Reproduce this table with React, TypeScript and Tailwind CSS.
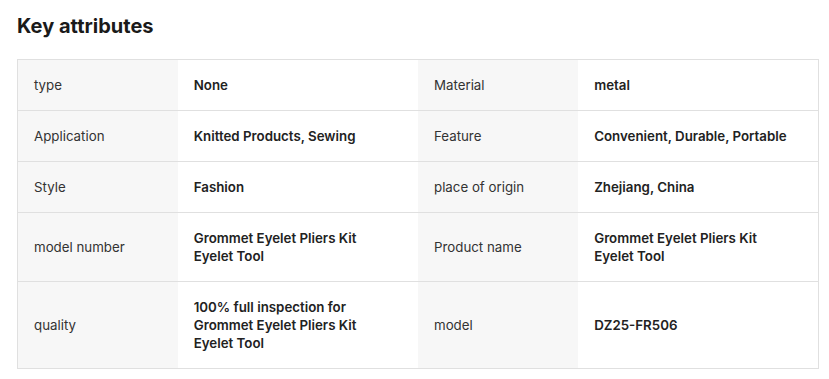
import React from 'react';

type Attr = { label: string; value: string };

const rows: [Attr, Attr][] = [
  [
    { label: 'type', value: 'None' },
    { label: 'Material', value: 'metal' },
  ],
  [
    { label: 'Application', value: 'Knitted Products, Sewing' },
    { label: 'Feature', value: 'Convenient, Durable, Portable' },
  ],
  [
    { label: 'Style', value: 'Fashion' },
    { label: 'place of origin', value: 'Zhejiang, China' },
  ],
  [
    { label: 'model number', value: 'Grommet Eyelet Pliers Kit Eyelet Tool' },
    { label: 'Product name', value: 'Grommet Eyelet Pliers Kit Eyelet Tool' },
  ],
  [
    { label: 'quality', value: '100% full inspection for Grommet Eyelet Pliers Kit Eyelet Tool' },
    { label: 'model', value: 'DZ25-FR506' },
  ],
];

const App: React.FC = () => {
  return (
    <div className="min-h-[379px] bg-white px-[17px] pt-[12px] font-['Inter','Liberation_Sans',sans-serif]">
      <h2 className="text-[20px] leading-[28px] font-bold text-[#1a1a1a] mb-[19px]">Key attributes</h2>
      <table className="w-[802px] border-collapse border border-[#e0e0e0] table-fixed text-[13.3px] leading-[18px]">
        <colgroup>
          <col className="w-[160px]" />
          <col className="w-[240px]" />
          <col className="w-[160px]" />
          <col className="w-[240px]" />
        </colgroup>
        <tbody>
          {rows.map((row, i) => (
            <tr key={i} className="border-b border-[#e0e0e0]">
              {row.map((attr, j) => (
                <React.Fragment key={j}>
                  <td className="bg-[#f7f7f7] px-4 py-4 text-[#333333] align-middle">{attr.label}</td>
                  <td className="bg-white pl-4 pr-[20px] py-4 font-semibold text-[#222222] align-middle">{attr.value}</td>
                </React.Fragment>
              ))}
            </tr>
          ))}
        </tbody>
      </table>
    </div>
  );
};

export default App;
